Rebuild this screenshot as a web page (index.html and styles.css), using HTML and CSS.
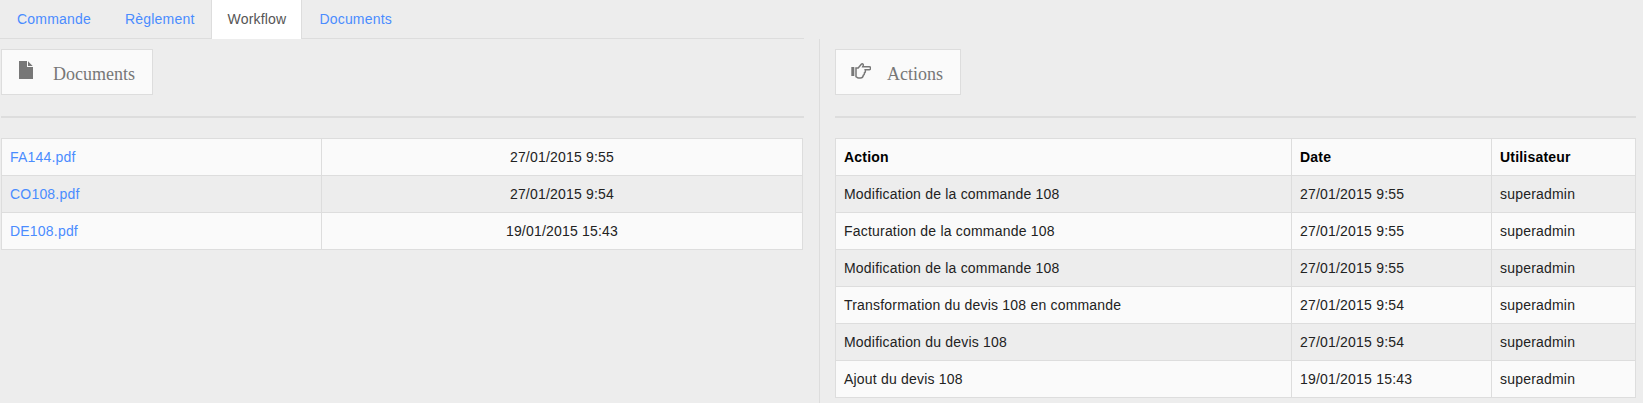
FILE: index.html
```html
<!DOCTYPE html>
<html lang="fr">
<head>
<meta charset="utf-8">
<title>Workflow</title>
<link rel="stylesheet" href="styles.css">
</head>
<body>
<nav class="tabs">
  <a class="tab" href="#">Commande</a>
  <a class="tab" href="#">Règlement</a>
  <a class="tab active" href="#">Workflow</a>
  <a class="tab" href="#">Documents</a>
</nav>
<main class="columns">
  <section class="col col-left">
    <h2 class="box-title">
      <svg class="icon icon-file" viewBox="0 0 14 18"><path d="M0 0H8V6H14V18H0Z M9 0.3L13.7 5H9Z" fill="#777"/></svg>
      <span class="box-label">Documents</span>
    </h2>
    <hr class="sep">
    <table class="grid docs">
      <colgroup><col class="c-file"><col></colgroup>
      <tr><td><a href="#">FA144.pdf</a></td><td class="center">27/01/2015 9:55</td></tr>
      <tr><td><a href="#">CO108.pdf</a></td><td class="center">27/01/2015 9:54</td></tr>
      <tr><td><a href="#">DE108.pdf</a></td><td class="center">19/01/2015 15:43</td></tr>
    </table>
  </section>
  <section class="col col-right">
    <h2 class="box-title">
      <svg class="icon icon-hand" viewBox="0 0 20 16"><path d="M0.3 4H3.3V13H0.3Z" fill="#777"/><path d="M5 5H7.2L10.3 1.3C11.2 0.3 12.6 1 12.2 2.4L11.7 3.8H18.3C20 3.8 20 6.8 18.3 6.8H14.2C14.6 8.3 14.1 9.6 13.4 10C13.5 11 13 12 12.3 12.3C12 14 11 15 9.5 15H7.6C6.4 15 5.8 14.2 5 13.6Z" fill="none" stroke="#777" stroke-width="1.5"/></svg>
      <span class="box-label">Actions</span>
    </h2>
    <hr class="sep">
    <table class="grid actions">
      <colgroup><col class="c-action"><col class="c-date"><col></colgroup>
      <tr class="head"><th>Action</th><th>Date</th><th>Utilisateur</th></tr>
      <tr><td>Modification de la commande 108</td><td>27/01/2015 9:55</td><td>superadmin</td></tr>
      <tr><td>Facturation de la commande 108</td><td>27/01/2015 9:55</td><td>superadmin</td></tr>
      <tr><td>Modification de la commande 108</td><td>27/01/2015 9:55</td><td>superadmin</td></tr>
      <tr><td>Transformation du devis 108 en commande</td><td>27/01/2015 9:54</td><td>superadmin</td></tr>
      <tr><td>Modification du devis 108</td><td>27/01/2015 9:54</td><td>superadmin</td></tr>
      <tr><td>Ajout du devis 108</td><td>19/01/2015 15:43</td><td>superadmin</td></tr>
    </table>
  </section>
</main>
</body>
</html>
```
FILE: styles.css
```css
* { box-sizing: border-box; }
html, body { margin: 0; height: 100%; overflow: hidden; }
body {
  background: #ededed;
  color: #222;
  font-family: "Liberation Sans", Arial, sans-serif;
  font-size: 14px;
  letter-spacing: 0.2px;
}
a { color: #4a8cff; text-decoration: none; }

.tabs {
  display: flex;
  height: 39px;
  margin-right: 839px;
  border-bottom: 1px solid #ddd;
}
.tab {
  display: block;
  padding: 10px 17px 0;
  height: 38px;
  line-height: 18px;
}
.tab.active {
  background: #fff;
  color: #555;
  border: 1px solid #ddd;
  border-width: 0 1px;
  padding: 10px 15px 0;
  height: 39px;
}

.columns { display: flex; height: 364px; }
.col-left { width: 820px; padding: 10px 15px 0 1px; border-right: 1px solid #ddd; }
.col-right { flex: 1; padding: 10px 7px 0 15px; }

.box-title {
  display: inline-flex;
  align-items: center;
  height: 46px;
  margin: 0;
  padding: 0 17px;
  background: #fafafa;
  border: 1px solid #ddd;
  font-family: "Liberation Serif", "Times New Roman", serif;
  font-size: 18px;
  font-weight: normal;
  letter-spacing: 0;
  color: #777;
}
.box-label { margin-top: 4px; }
.icon { display: block; flex: none; }
.icon-file { width: 14px; height: 18px; margin: -4px 20px 0 0; }
.icon-hand { width: 20px; height: 16px; margin: -2px 16px 0 -2px; }

.sep {
  height: 2px;
  margin: 21px 0 20px;
  background: #ddd;
  border: 0;
}

.grid {
  width: 100%;
  table-layout: fixed;
  border-collapse: separate;
  border-spacing: 0;
  border-top: 1px solid #ddd;
  border-left: 1px solid #ddd;
  background: #fafafa;
}
.docs { width: 802px; }
.c-file { width: 320px; }
.c-action { width: 456px; }
.c-date { width: 200px; }
.grid td, .grid th {
  height: 37px;
  padding: 0 8px;
  border-right: 1px solid #ddd;
  border-bottom: 1px solid #ddd;
  text-align: left;
  vertical-align: middle;
}
.grid th { font-weight: bold; color: #000; }
.grid td { color: #222; }
.grid td.center { text-align: center; }
.grid tr:nth-child(even) { background: #ededed; }
```
